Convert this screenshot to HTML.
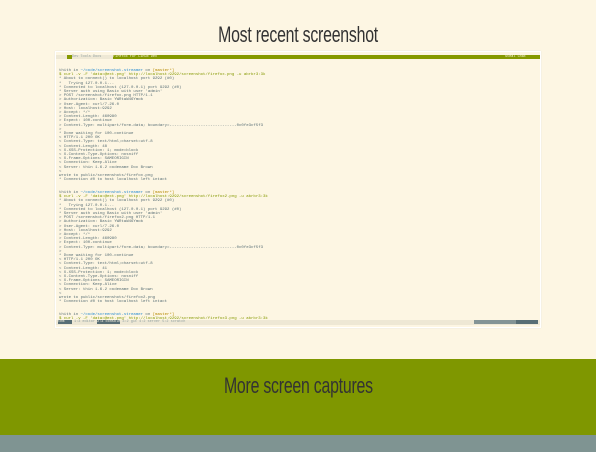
<!DOCTYPE html>
<html><head><meta charset="utf-8"><style>
html,body{margin:0;padding:0;width:596px;height:452px;overflow:hidden;background:#fdf6e3;font-family:"Liberation Sans",sans-serif}
.t{position:absolute;left:0;width:596px;text-align:center;color:#333;font-weight:300}
.t span{display:inline-block;transform:scaleX(.72);font-size:22px;letter-spacing:-.3px}
#shot{position:absolute;left:55px;top:51px;width:484px;height:275px;border:1.5px solid #fff;background:#fdf6e3;box-shadow:0 0 1px #ddd;overflow:hidden}
.bar{position:absolute;top:3px;height:4px;font-size:3.5px;line-height:4px;font-family:"Liberation Mono",monospace}
.ln{position:absolute;left:3px;font-family:"Liberation Mono",monospace;font-size:4px;line-height:4.2px;color:#586e75;white-space:pre}
.g{color:#859900}.y{color:#b58900}.b{color:#268bd2}
</style></head><body>
<div class="t" style="top:22px"><span>Most recent screenshot</span></div>
<div id="shot">
<div class="bar" style="left:0;width:484px;background:#eee8d5"></div>
<div class="bar" style="left:11px;width:5px;background:#859900"></div>
<div class="bar" style="left:16px;width:40px;color:#93a1a1">Dev Tools Docs</div>
<div class="bar" style="left:57px;width:427px;background:#859900;color:#fdf6e3">Firefox for Linux Dev<span style="position:absolute;right:14px">Steal Chat</span></div>
<div class="ln" style="top:17px">thith in <span class="b">~/code/screenshot-streamer</span> on <span class="y">[master*]</span>
<span class="g">$ curl -v -F 'data=@ext.png' http://localhost:9292/screenshot/firefox.png -u abrbr3:3k</span>
* About to connect() to localhost port 9292 (#0)
*   Trying 127.0.0.1...
* Connected to localhost (127.0.0.1) port 9292 (#0)
* Server auth using Basic with user 'admin'
> POST /screenshot/firefox.png HTTP/1.1
> Authorization: Basic YWRtaW46Ymob
> User-Agent: curl/7.26.0
> Host: localhost:9292
> Accept: */*
> Content-Length: 460980
> Expect: 100-continue
> Content-Type: multipart/form-data; boundary=----------------------------0c0fe3cf5f3
>
* Done waiting for 100-continue
< HTTP/1.1 200 OK
< Content-Type: text/html;charset=utf-8
< Content-Length: 48
< X-XSS-Protection: 1; mode=block
< X-Content-Type-Options: nosniff
< X-Frame-Options: SAMEORIGIN
< Connection: Keep-Alive
< Server: thin 1.6.2 codename Doc Brown
<
wrote to public/screenshots/firefox.png
* Connection #0 to host localhost left intact


thith in <span class="b">~/code/screenshot-streamer</span> on <span class="y">[master*]</span>
<span class="g">$ curl -v -F 'data=@ext.png' http://localhost:9292/screenshot/firefox2.png -u abrbr3:3k</span>
* About to connect() to localhost port 9292 (#0)
*   Trying 127.0.0.1...
* Connected to localhost (127.0.0.1) port 9292 (#0)
* Server auth using Basic with user 'admin'
> POST /screenshot/firefox2.png HTTP/1.1
> Authorization: Basic YWRtaW46Ymob
> User-Agent: curl/7.26.0
> Host: localhost:9292
> Accept: */*
> Content-Length: 460980
> Expect: 100-continue
> Content-Type: multipart/form-data; boundary=----------------------------0c0fe3cf5f3
>
* Done waiting for 100-continue
< HTTP/1.1 200 OK
< Content-Type: text/html;charset=utf-8
< Content-Length: 41
< X-XSS-Protection: 1; mode=block
< X-Content-Type-Options: nosniff
< X-Frame-Options: SAMEORIGIN
< Connection: Keep-Alive
< Server: thin 1.6.2 codename Doc Brown
<
wrote to public/screenshots/firefox2.png
* Connection #0 to host localhost left intact


thith in <span class="b">~/code/screenshot-streamer</span> on <span class="y">[master*]</span>
<span class="g">$ curl -v -F 'data=@ext.png' http://localhost:9292/screenshot/firefox3.png -u abrbr3:3k</span></div>
<div style="position:absolute;left:0;top:268px;width:484px;height:5px;background:#eee8d5"></div>
<div class="bar" style="top:268px;left:2px;width:14px;background:#586e75;color:#fdf6e3">  thm</div>
<div class="bar" style="top:268px;left:18px;width:120px;color:#93a1a1">1:3 editor <span style="background:#586e75;color:#fdf6e3">2:3 console</span> 3:2 git 4:2 server 5:2 scratch</div>
<div class="bar" style="top:268px;left:418px;width:42px;background:#839496"></div>
<div class="bar" style="top:268px;left:460px;width:22px;background:#586e75"></div>
</div>
<div style="position:absolute;left:0;top:359px;width:596px;height:76px;background:#7f9700"></div>
<div class="t" style="top:373px"><span>More screen captures</span></div>
<div style="position:absolute;left:0;top:435px;width:596px;height:17px;background:#7f9492"></div>
</body></html>
